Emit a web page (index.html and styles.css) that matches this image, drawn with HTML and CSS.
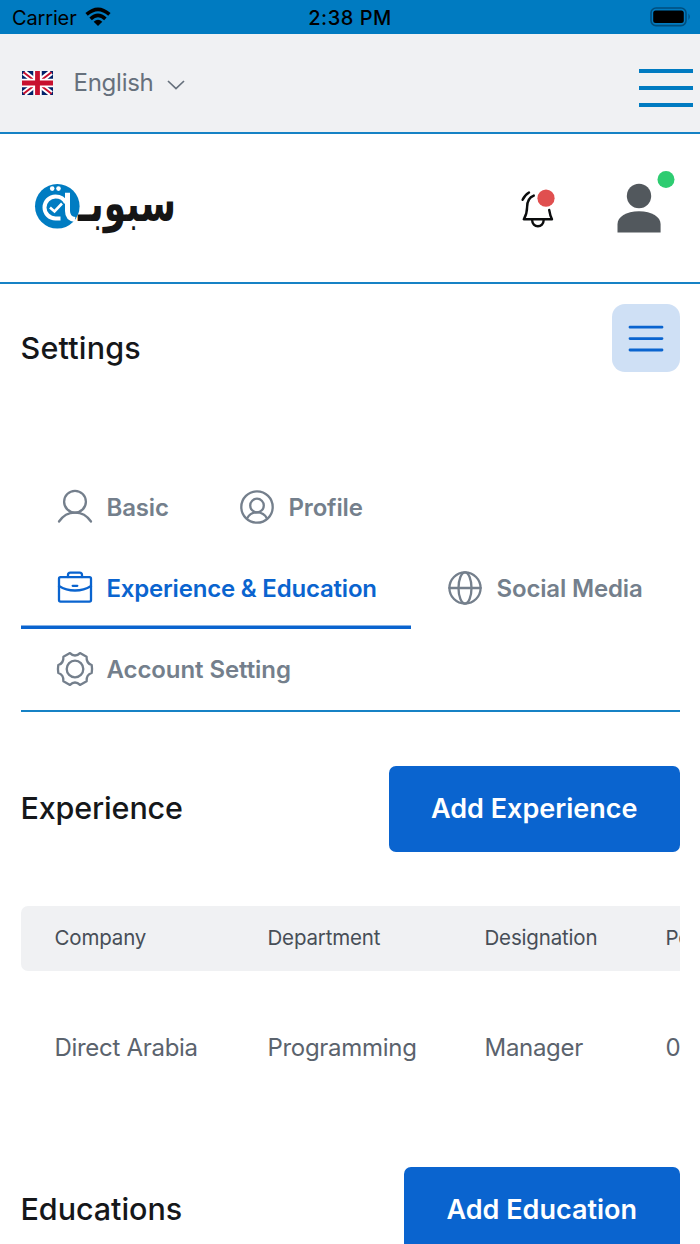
FILE: index.html
```html
<!DOCTYPE html>
<html lang="en">
<head>
<meta charset="utf-8">
<title>Settings</title>
<link rel="stylesheet" href="styles.css">
</head>
<body>
<div class="status">
  <div class="carrier"><span class="carrier-name">Carrier</span>
    <svg width="26" height="20" viewBox="0 0 26 20"><g fill="none" stroke="#000" stroke-width="3.6"><path d="M1.6 7.4Q13-2.8 24.4 7.4"/><path d="M5.6 11.8Q13 5 20.4 11.8"/></g><path d="M8.7 14.7Q13 11 17.3 14.7L13 19Z"/></svg>
  </div>
  <span class="time">2:38 PM</span>
  <svg class="battery" width="41" height="20" viewBox="0 0 41 20"><rect x="1" y="1" width="35" height="17.6" rx="5" fill="none" stroke="#004e7d" stroke-width="1.6"/><rect x="3.2" y="3.4" width="30.6" height="12.6" rx="2.5"/><path d="M38.5 6.5Q41 9.7 38.5 13Z" fill="#004e7d"/></svg>
</div>
<div class="langbar">
  <div class="lang">
    <svg width="31" height="24" viewBox="0 0 31 24"><path fill="#012169" d="M0 0h31v24H0z"/><path d="M2 1.5 29 22.5M29 1.5 2 22.5" stroke="#fff" stroke-width="6"/><path d="M1.5 1.2 29.5 22.8M29.5 1.2 1.5 22.8" stroke="#c8102e" stroke-width="2"/><path d="M15.5 0v24M0 12h31" stroke="#fff" stroke-width="8.5"/><path d="M15.5 0v24M0 12h31" stroke="#c8102e" stroke-width="4.8"/></svg>
    <span class="lang-name">English</span>
    <svg class="chev" width="20" height="12" viewBox="0 0 20 12"><path d="M2 2l8 7.6L18 2" fill="none" stroke="#66707c" stroke-width="1.7"/></svg>
  </div>
  <div class="burger"><i></i><i></i><i></i></div>
</div>
<header class="header">
  <svg class="logo" width="142" height="54" viewBox="0 0 142 54">
    <g transform="translate(141 38) scale(1 1.35)"><text class="logo-text" x="0" y="0" direction="rtl" textLength="98" lengthAdjust="spacingAndGlyphs">سبوبـ</text></g>
    <circle cx="22.3" cy="23.3" r="22.3" fill="#007cc2"/>
    <g fill="none" stroke="#fff"><path d="M31 20C29 15.500 25.500 13.500 20.500 13.500A11 11 0 0 0 20.500 35.500H25.500" stroke-width="4"/><path d="M32.500 9.700V28Q32.500 35.500 40 36.500" stroke-width="5"/><path d="M15 24.500l4.500 4 7.500-8" stroke-width="2.6"/></g>
    <circle cx="17.200" cy="5.600" r="2.300" fill="#fff"/><circle cx="23.500" cy="5.600" r="2.300" fill="#fff"/>
  </svg>
  <div class="actions">
    <svg class="bell" width="36" height="40" viewBox="0 0 36 40"><g fill="none" stroke="#0b0c0d" stroke-width="2.4" stroke-linecap="round" stroke-linejoin="round"><path d="M1.6 8.8Q3.5 4.2 8 1.5"/><path d="M12.8 4.6C6.8 6.9 6.1 11.5 6.1 16C6.1 22 4.8 24.8 2.8 28.3H31C29.2 25 28.8 22.7 28.2 19"/><path d="M11.2 29.5a5.700 5.700 0 0 0 11.400 0"/></g><circle cx="25" cy="7.2" r="8.6" fill="#e04f4f"/></svg>
    <svg class="user" width="58" height="62" viewBox="0 0 58 62"><circle cx="22" cy="25" r="12.2" fill="#52585d"/><path d="M.5 61.5V53C.5 46 9 40.2 22 40.2S43.6 46 43.6 53v8.5z" fill="#52585d"/><circle cx="49" cy="8.5" r="8.5" fill="#2ecc71"/></svg>
  </div>
</header>
<main class="main">
  <div class="titlebar"><h1 class="heading title">Settings</h1>
    <button class="menu"><svg width="36" height="28" viewBox="0 0 36 28"><path d="M2 3.200h32M2 14.600h32M2 26h32" stroke="#0a64cf" stroke-width="2.8" stroke-linecap="round"/></svg></button>
  </div>
  <nav class="tabs">
    <a class="tab basic"><svg class="icon" viewBox="0 0 36 36"><circle cx="18" cy="12.7" r="10.9"/><path d="M2 32.5Q8 23.6 18 23.6T34 32.5"/></svg><span class="t-basic">Basic</span></a>
    <a class="tab profile"><svg class="icon" viewBox="0 0 36 36"><circle cx="18" cy="18" r="15.7"/><circle cx="18" cy="16.5" r="6.8"/><path d="M8 29.5Q11 23.3 18 23.3T28 29.5"/></svg><span class="t-profile">Profile</span></a>
    <a class="tab active"><svg class="icon" viewBox="0 0 36 36"><rect x="2" y="7.2" width="32" height="24.4" rx="1.5"/><path d="M11 7V5Q11 2.6 13.4 2.6H22.6Q25 2.6 25 5V7M2 16Q9 20.5 18 20.5T34 16M15.7 15.8h4.6"/></svg><span class="t-exp">Experience &amp; Education</span></a>
    <a class="tab social"><svg class="icon" viewBox="0 0 36 36"><circle cx="18" cy="18" r="15.6"/><ellipse cx="18" cy="18" rx="6.5" ry="15.6"/><path d="M2.4 18h31.2"/></svg><span class="t-social">Social Media</span></a>
    <a class="tab account"><svg class="icon" viewBox="0 0 36 36"><circle cx="18" cy="18" r="8.3"/><path d="M13 2.1Q15.3 4.500 18 4.500T23 2.100L29.600 5.800Q29.200 12.500 34.700 14Q35.400 18 34.700 22Q29.200 23.500 29.600 30.200L23 33.900Q20.700 31.500 18 31.500T13 33.900L6.400 30.200Q6.800 23.500 1.300 22Q.6 18 1.300 14Q6.800 12.500 6.400 5.800Z"/></svg><span class="t-account">Account Setting</span></a>
  </nav>
  <section class="section">
    <h2 class="heading h-exp">Experience</h2><button class="btn add-exp"><span>Add Experience</span></button>
  </section>
  <div class="table">
    <div class="row head"><span>Company</span><span>Department</span><span>Designation</span><span>Period</span></div>
    <div class="row body"><span>Direct Arabia</span><span>Programming</span><span>Manager</span><span>01</span></div>
  </div>
  <section class="section second">
    <h2 class="heading h-edu">Educations</h2><button class="btn add-edu"><span>Add Education</span></button>
  </section>
</main>
</body>
</html>
```
FILE: styles.css
```css
* { box-sizing: border-box; }
html, body { margin: 0; height: 1244px; overflow: hidden; }
body { font-family: Inter, "Liberation Sans", sans-serif; background: #fff; color: #15171a; }
svg { display: block; flex: none; overflow: visible; }
button { border: 0; padding: 0; font-family: inherit; }

.status { height: 34px; background: #007bc1; color: #000; display: grid; grid-template-columns: 1fr auto 1fr; align-items: center; padding: 0 9px 0 12px; font-size: 20px; }
.carrier { display: flex; align-items: center; gap: 8px; letter-spacing: -.15px; }
.carrier-name, .time { padding-top: 2px; }
.time { font-weight: 500; letter-spacing: .5px; margin-right: 3px; }
.battery { justify-self: end; }

.langbar { height: 100px; background: #f0f1f3; border-bottom: 2px solid #1682c5; display: flex; justify-content: space-between; padding: 0 7px 0 22px; }
.lang { display: flex; align-items: center; color: #66707c; font-size: 24px; letter-spacing: -.25px; }
.lang-name { width: 80px; margin: 0 12px 2px 20.5px; }
.chev { margin-top: 3px; }
.burger { width: 54px; padding-top: 35px; display: flex; flex-direction: column; gap: 13.5px; }
.burger i { height: 3.5px; background: #007bc1; }

.header { height: 150px; border-bottom: 2px solid #1682c5; display: flex; justify-content: space-between; padding: 0 25px 0 35px; }
.logo { margin-top: 49px; }
.logo-text { font-family: "DejaVu Sans", sans-serif; font-weight: 700; font-size: 38px; fill: #151515; }
.actions { display: flex; align-items: flex-start; }
.bell { margin: 57px 60px 0 0; }
.user { margin-top: 37px; }

.main { padding: 0 20.5px; }
.heading { margin: 0; font-size: 30.5px; font-weight: 500; line-height: 40px; }
.titlebar { display: flex; justify-content: space-between; padding-top: 20.4px; height: 183px; }
.title { margin-top: 23.2px; letter-spacing: .2px; }
.h-exp { letter-spacing: -.15px; margin-top: -2px; }
.h-edu { margin-top: -2px; letter-spacing: -.05px; }
.menu { width: 67.5px; height: 67.5px; border-radius: 13px; background: #cfe0f5; display: grid; place-items: center; }

.tabs { display: flex; flex-wrap: wrap; height: 245px; border-bottom: 2px solid #1682c5; }
.tab { height: 81px; display: flex; align-items: center; gap: 14px; padding-left: 36px; color: #747f8c; font-size: 24px; font-weight: 600; letter-spacing: -.16px; white-space: nowrap; }
.icon { width: 36px; height: 36px; margin-top: -1px; fill: none; stroke: currentColor; stroke-width: 2.3; stroke-linecap: round; stroke-linejoin: round; }
.basic { width: 182px; }
.profile { width: 195px; }
.active { width: 390px; color: #0a64cf; letter-spacing: -.2px; box-shadow: inset 0 -3.5px #0a64cf; }
.social { width: 268px; }
.account { width: 306px; letter-spacing: -.08px; }

.section { display: flex; justify-content: space-between; align-items: center; margin-top: 54px; height: 86px; }
.btn { height: 86px; border-radius: 7px; background: #0a64cf; color: #fff; font-size: 27px; font-weight: 600; padding-bottom: 1px; }
.add-exp { width: 290.5px; }
.add-edu { width: 275.5px; }
.table { margin-top: 54px; overflow: hidden; }
.row { width: 720px; display: grid; grid-template-columns: 213px 217px 181px 109px; padding-left: 34px; align-items: center; white-space: nowrap; }
.head { height: 64.5px; padding-bottom: 2px; border-radius: 7px; background: #f0f1f3; color: #474e57; font-size: 20.5px; letter-spacing: -.17px; }
.body { height: 154px; color: #5b636d; font-size: 24px; letter-spacing: -.3px; }
.second { margin-top: 42px; }
```
